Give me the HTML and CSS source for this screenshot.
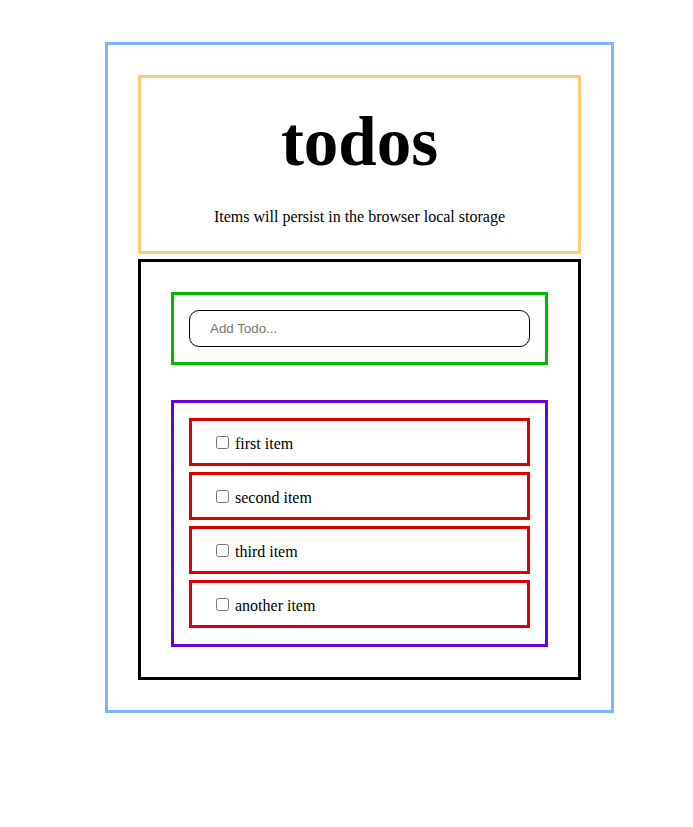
FILE: index.html
```html
<!DOCTYPE html>
<html lang="en">
<head>
    <meta charset="UTF-8">
    <meta name="viewport" content="width=device-width, initial-scale=1.0">
    <title>todos</title>
    <link rel="stylesheet" href="styles.css">
</head>
<body>
    <div class="app">
        <header class="header">
            <h1>todos</h1>
            <p>Items will persist in the browser local storage</p>
        </header>
        <section class="main">
            <form class="todo-form">
                <input type="text" class="todo-input" placeholder="Add Todo...">
            </form>
            <ul class="todo-list">
                <li class="todo-item"><input type="checkbox">first item</li>
                <li class="todo-item"><input type="checkbox">second item</li>
                <li class="todo-item"><input type="checkbox">third item</li>
                <li class="todo-item"><input type="checkbox">another item</li>
            </ul>
        </section>
    </div>
</body>
</html>
```

FILE: styles.css
```css
body {
    margin: 8px;
    font-family: 'Liberation Serif', 'Times New Roman', serif;
    font-size: 16px;
    color: #000;
    background: #fff;
}

.app {
    box-sizing: border-box;
    width: 509px;
    margin: 34px 0 0 97px;
    padding: 30px;
    border: 3px solid #7db4ff;
}

.header {
    border: 3px solid #ffcc77;
    padding: 25px 0;
    text-align: center;
}

.header h1 {
    margin: 0;
    font-size: 69px;
    font-weight: bold;
}

.header p {
    margin: 26px 0 0;
}

.main {
    margin-top: 5px;
    padding: 30px;
    border: 3px solid #000;
}

.todo-form {
    margin: 0 0 35px;
    padding: 15px;
    border: 3px solid #00bb00;
}

.todo-input {
    display: block;
    box-sizing: border-box;
    width: 100%;
    height: 37px;
    margin: 0;
    padding: 0 20px;
    border: 1px solid #000;
    border-radius: 10px;
    font-family: 'Liberation Sans', Arial, sans-serif;
    font-size: 13.333px;
    outline: none;
}

.todo-input::placeholder {
    color: #757575;
}

.todo-list {
    display: flex;
    flex-direction: column;
    gap: 6px;
    list-style: none;
    margin: 0;
    padding: 15px 15px 16px;
    border: 3px solid #6e00d4;
}

.todo-item {
    padding: 12px 20px 10px;
    border: 3px solid #dd0000;
}

.todo-item input {
    margin: 3px 6px 3px 4px;
}
```
